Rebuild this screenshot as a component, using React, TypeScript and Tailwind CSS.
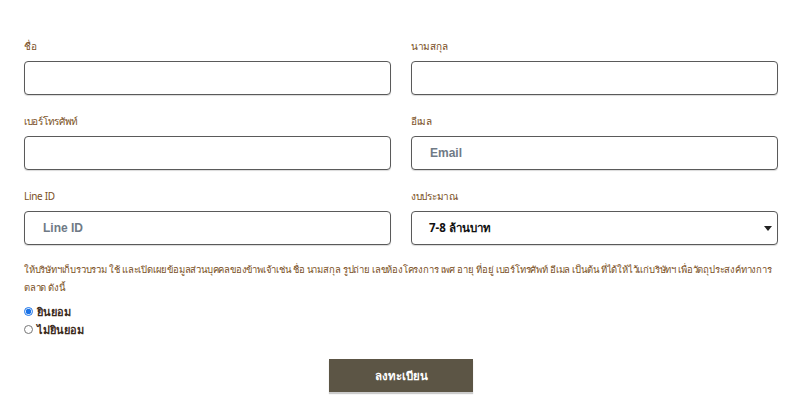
import { useState } from "react";

function Field({ label, placeholder }: { label: string; placeholder?: string }) {
  return (
    <div className="flex flex-col">
      <label className="text-[10px] tracking-[-0.3px] leading-[16px] text-[#7a4f24] mb-[7px]">{label}</label>
      <input
        placeholder={placeholder}
        className="h-[34px] w-full rounded-[4px] border border-[#5a5a5a] bg-white px-[18px] text-[12px] font-bold text-[#222] placeholder:text-[#6f7a86] shadow-[0_1px_1px_rgba(0,0,0,0.15)] outline-none font-['Liberation_Sans',sans-serif]"
      />
    </div>
  );
}

export default function App() {
  const [consent, setConsent] = useState("yes");
  return (
    <div className="w-[800px] h-[413px] bg-white font-['Noto_Sans','Liberation_Sans',sans-serif]">
      <form className="pl-[24px] pr-[22px] pt-[38px]" onSubmit={(e) => e.preventDefault()}>
        <div className="grid grid-cols-2 gap-x-[20px] gap-y-[18px]">
          <Field label="ชื่อ" />
          <Field label="นามสกุล" />
          <Field label="เบอร์โทรศัพท์" />
          <Field label="อีเมล" placeholder="Email" />
          <Field label="Line ID" placeholder="Line ID" />
          <div className="flex flex-col">
            <label className="text-[10px] tracking-[-0.3px] leading-[16px] text-[#7a4f24] mb-[7px]">งบประมาณ</label>
            <div className="relative h-[34px] w-full rounded-[4px] border border-[#5a5a5a] bg-white shadow-[0_1px_1px_rgba(0,0,0,0.15)] flex items-center px-[17px]">
              <span className="text-[11.5px] font-bold text-[#111]">7-8 ล้านบาท</span>
              <svg className="absolute right-[5px] top-[14px]" width="8" height="5" viewBox="0 0 8 5">
                <path d="M0 0h8L4 5z" fill="#222" />
              </svg>
            </div>
          </div>
        </div>
        <p className="mt-[16px] text-[9.5px] tracking-[-0.2px] leading-[18px] text-[#7a4f24]">
          <span className="block whitespace-nowrap">
            ให้บริษัทฯเก็บรวบรวม ใช้ และเปิดเผยข้อมูลส่วนบุคคลของข้าพเจ้าเช่น ชื่อ นามสกุล รูปถ่าย เลขห้องโครงการ เพศ อายุ ที่อยู่ เบอร์โทรศัพท์ อีเมล เป็นต้น ที่ได้ให้ไว้แก่บริษัทฯ เพื่อวัตถุประสงค์ทางการ
          </span>
          <span className="block">ตลาด ดังนี้</span>
        </p>
        <div className="mt-[6px] flex flex-col gap-[1px]">
          <label className="flex items-center gap-[4px] text-[11px] leading-[17px] font-bold text-[#3b2a1a]">
            <input
              type="radio"
              name="consent"
              checked={consent === "yes"}
              onChange={() => setConsent("yes")}
              className="m-0 h-[9px] w-[9px] accent-[#1a73e8]"
            />
            ยินยอม
          </label>
          <label className="flex items-center gap-[4px] text-[11px] leading-[17px] font-bold text-[#3b2a1a]">
            <input
              type="radio"
              name="consent"
              checked={consent === "no"}
              onChange={() => setConsent("no")}
              className="m-0 h-[9px] w-[9px] accent-[#1a73e8]"
            />
            ไม่ยินยอม
          </label>
        </div>
        <div className="mt-[21px] flex justify-center">
          <button
            type="submit"
            className="h-[33px] w-[144px] bg-[#5c5545] text-[11.5px] font-bold text-white shadow-[0_2px_1px_rgba(0,0,0,0.2)]"
          >
            ลงทะเบียน
          </button>
        </div>
      </form>
    </div>
  );
}
